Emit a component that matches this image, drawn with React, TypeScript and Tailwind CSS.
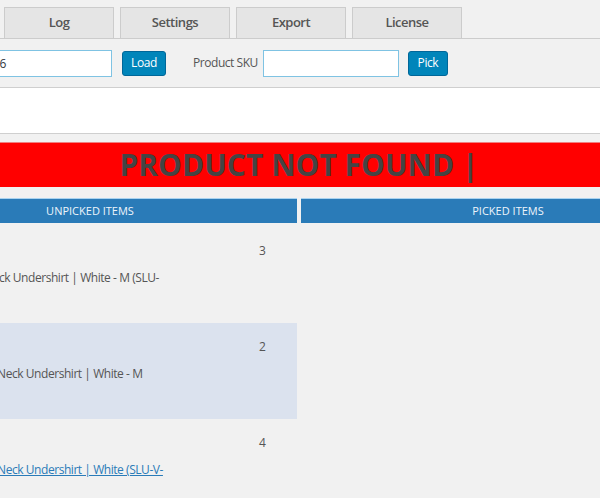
import React from "react";

const tabs = ["Log", "Settings", "Export", "License"];

type Row = { qty: number; name: string; offset: string; bg: string; link?: boolean };

const rows: Row[] = [
  { qty: 3, name: "V-Neck Undershirt | White - M (SLU-", offset: "ml-[91px]", bg: "bg-[#f1f1f1]" },
  { qty: 2, name: "V-Neck Undershirt | White - M", offset: "ml-[104px]", bg: "bg-[#dbe2ee]" },
  { qty: 4, name: "V-Neck Undershirt | White (SLU-V-", offset: "ml-[104px]", bg: "bg-[#f1f1f1]", link: true },
];

export default function App() {
  return (
    <div className="w-[600px] h-[498px] overflow-hidden bg-[#f1f1f1] font-['Open_Sans',sans-serif] text-[#555]">
      {/* Tabs */}
      <div className="flex gap-[6px] pl-[4px] pt-[7px] border-b border-[#ccc]">
        {tabs.map((t) => (
          <div
            key={t}
            className="w-[110px] h-[31px] flex items-center justify-center border border-b-0 border-[#ccc] bg-[#e5e5e5] text-[13px] tracking-[-0.5px] font-semibold text-[#555]"
          >
            {t}
          </div>
        ))}
      </div>

      {/* Toolbar */}
      <div className="h-[48px] flex items-center">
        <input
          readOnly
          value="4536"
          className="-ml-[27px] w-[139px] h-[27px] border border-[#7fc3e3] bg-white pl-[6px] text-[12px] tracking-[-0.4px] text-[#32373c] outline-none"
        />
        <button className="ml-[10px] w-[44px] h-[25px] rounded-[3px] border border-[#006799] bg-[#0085ba] text-[12px] tracking-[-0.4px] text-white">
          Load
        </button>
        <span className="ml-[27px] text-[12px] tracking-[-0.45px] text-[#555]">Product SKU</span>
        <input
          readOnly
          value=""
          className="ml-[5px] w-[136px] h-[27px] border border-[#7fc3e3] bg-white outline-none"
        />
        <button className="ml-[9px] w-[40px] h-[25px] rounded-[3px] border border-[#006799] bg-[#0085ba] text-[12px] tracking-[-0.4px] text-white">
          Pick
        </button>
      </div>

      {/* White box */}
      <div className="h-[47px] bg-white border-t border-b border-[#cfcfcf]" />

      {/* Main content (wider than the viewport) */}
      <div className="-ml-[117px] w-[832px] pt-[8px]">
        <div className="h-[45px] bg-[#ff0000] border-t border-[#f08080] flex items-center justify-center text-[30px] font-bold text-[#444] leading-none">
          PRODUCT NOT FOUND |
        </div>

        <div className="mt-[11px] flex gap-[4px]">
          {/* Unpicked */}
          <div className="w-[414px]">
            <div className="h-[25px] bg-[#2a7bb8] border-t border-[#a9d3f0] flex items-center justify-center text-[11px] text-[#eef5fb] uppercase">
              Unpicked Items
            </div>
            <div className="pt-[4px]">
              {rows.map((r, i) => (
                <div key={i} className={`h-[96px] flex ${r.bg}`}>
                  <div className="w-[376px] pt-[41px]">
                    <div className={`${r.offset} whitespace-nowrap text-[12px] tracking-[-0.45px] leading-[20px]`}>
                      {r.link ? (
                        <span className="text-[#2a7bb8] underline">{r.name}</span>
                      ) : (
                        <span className="text-[#555]">{r.name}</span>
                      )}
                    </div>
                  </div>
                  <div className="pt-[14px] text-[12px] leading-[20px] text-[#555]">{r.qty}</div>
                </div>
              ))}
            </div>
          </div>

          {/* Picked */}
          <div className="w-[414px]">
            <div className="h-[25px] bg-[#2a7bb8] border-t border-[#a9d3f0] flex items-center justify-center text-[11px] text-[#eef5fb] uppercase">
              Picked Items
            </div>
          </div>
        </div>
      </div>
    </div>
  );
}
